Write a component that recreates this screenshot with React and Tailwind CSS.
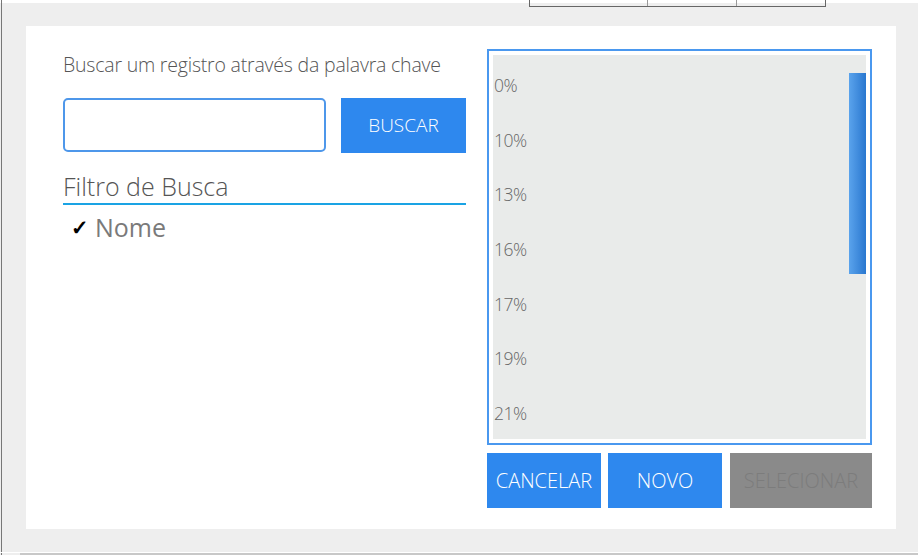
import { useState } from "react";

const items = ["0%", "10%", "13%", "16%", "17%", "19%", "21%"];

function App() {
  const [query, setQuery] = useState("");

  return (
    <div
      className="relative h-[555px] w-[918px] overflow-hidden bg-[#eeeeee] font-['Open_Sans',sans-serif]"
    >
      {/* top strip with the tab box */}
      <div className="h-[3px] bg-white" />
      <div className="absolute left-[529px] top-0 flex h-[7px] w-[297px] border-x border-b border-[#666]">
        <div className="w-[118px] border-r border-[#999]" />
        <div className="w-[89px] border-r border-[#999]" />
      </div>
      {/* left edge */}
      <div className="absolute left-[1px] top-0 h-full w-px bg-[#777]" />

      <div className="ml-[26px] mt-[23px] flex h-[503px] w-[870px] bg-white">
        {/* left column */}
        <div className="ml-[37px] mt-[27px] w-[403px]">
          <p className="whitespace-nowrap text-[19.5px] font-light leading-[24px] text-[#555] tracking-[-0.2px]">
            Buscar um registro através da palavra chave
          </p>
          <div className="mt-[21px] flex gap-[15px]">
            <input
              value={query}
              onChange={(e) => setQuery(e.target.value)}
              className="h-[54px] w-[263px] rounded-[5px] border-2 border-[#4e97ea] outline-none"
            />
            <button className="h-[55px] w-[125px] bg-[#2e88ee] text-[19px] font-light text-white">
              BUSCAR
            </button>
          </div>
          <div className="mt-[17px] border-b-2 border-[#1aa3e4] pb-[1px]">
            <span className="text-[25px] font-light leading-[32px] text-[#555]">
              Filtro de Busca
            </span>
          </div>
          <div className="ml-[8px] mt-[6px] flex items-center gap-[6px] leading-[32px]">
            <span className="text-[21px] font-bold text-black">✓</span>
            <span className="text-[25px] font-medium text-[#7a7a7a]">Nome</span>
          </div>
        </div>

        {/* right column */}
        <div className="ml-[21px] mt-[23px] flex w-[385px] flex-col">
          <div className="h-[396px] border-2 border-[#4a98ef] bg-white p-[4px]">
            <div className="relative h-full bg-[#e9ebea] pt-[18px]">
              {items.map((item) => (
                <div
                  key={item}
                  className="h-[54.7px] pl-px text-[17.5px] font-light leading-[24px] text-[#666] tracking-[-0.5px]"
                >
                  {item}
                </div>
              ))}
              <div className="absolute right-0 top-[18px] h-[201px] w-[17px] bg-gradient-to-r from-[#5aa3ec] to-[#2877cf]" />
            </div>
          </div>
          <div className="mt-[8px] flex gap-[7px]">
            <button className="h-[55px] w-[114px] bg-[#2e88ee] text-[20px] font-light text-white">
              CANCELAR
            </button>
            <button className="h-[55px] w-[114px] bg-[#2e88ee] text-[20px] font-light text-white">
              NOVO
            </button>
            <button className="ml-[1px] h-[55px] w-[142px] bg-[#8a8a8a] text-[20px] font-light text-[#7c7c7c]">
              SELECIONAR
            </button>
          </div>
        </div>
      </div>

      {/* bottom edge */}
      <div className="absolute bottom-[2px] left-0 h-px w-full bg-white" />
      <div className="absolute bottom-0 left-[20px] h-[2px] w-full bg-[#c8c8c8]" />
    </div>
  );
}

export default App;
